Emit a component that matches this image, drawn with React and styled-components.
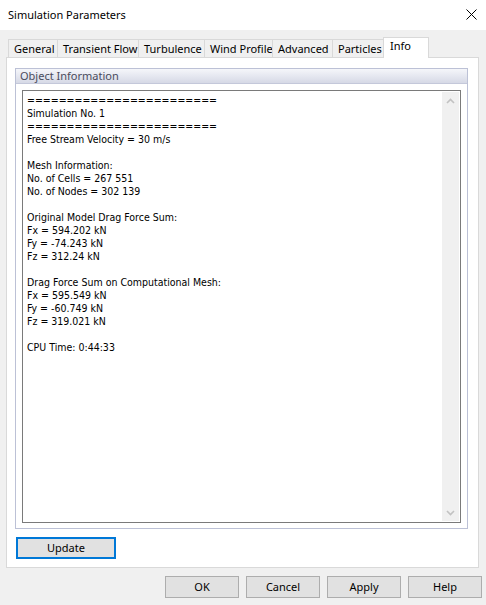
import React from "react";
import styled, { createGlobalStyle } from "styled-components";

const Global = createGlobalStyle`
  html, body { margin: 0; padding: 0; background: #f0f0f0; }
  body { font-family: "Noto Sans", "Open Sans", sans-serif; font-size: 11px; color: #000; }
  * { box-sizing: border-box; }
`;

const Dialog = styled.div`
  width: 486px;
  height: 605px;
  display: flex;
  flex-direction: column;
  background: #f0f0f0;
  overflow: hidden;
`;

const TitleBar = styled.div`
  height: 30px;
  flex: none;
  background: #fff;
  display: flex;
  align-items: center;
  justify-content: space-between;
  padding: 0 8px 1px 8px;
`;

const Title = styled.span`
  font-size: 11px;
  line-height: 16px;
  color: #000;
`;

const CloseButton = styled.button`
  width: 12px;
  height: 12px;
  border: none;
  background: transparent;
  padding: 0;
  margin-right: 1px;
  display: flex;
  align-items: center;
  justify-content: center;
`;

const Body = styled.div`
  flex: 1;
  display: flex;
  flex-direction: column;
  padding: 7px 7px 7px 6px;
`;

const TabStrip = styled.div`
  height: 21px;
  margin-bottom: -1px;
  padding-left: 2px;
  display: flex;
  align-items: flex-end;
  position: relative;
  z-index: 1;
`;

const Tab = styled.div`
  width: ${(p) => p.$w}px;
  height: ${(p) => (p.$active ? 21 : 18)}px;
  margin-bottom: ${(p) => (p.$active ? 0 : 1)}px;
  margin-left: ${(p) => (p.$first ? 0 : -1)}px;
  border: 1px solid #d9d9d9;
  border-bottom: none;
  background: ${(p) => (p.$active ? "#fff" : "#f0f0f0")};
  position: relative;
  z-index: ${(p) => (p.$active ? 2 : 1)};
  padding: ${(p) => (p.$active ? "0 0 4px 6px" : "1px 0 0 5px")};
  font-size: 11px;
  line-height: 16px;
  white-space: nowrap;
  display: flex;
  align-items: ${(p) => (p.$active ? "flex-end" : "flex-start")};
`;

const Panel = styled.div`
  height: 511px;
  border: 1px solid #d9d9d9;
  background: #fff;
  display: flex;
  flex-direction: column;
  padding: 10px 10px 8px 8px;
`;

const Group = styled.div`
  height: 461px;
  border: 1px solid #bcc1d6;
  display: flex;
  flex-direction: column;
`;

const GroupHeader = styled.div`
  height: 15px;
  flex: none;
  border-bottom: 1px solid #c4c8da;
  background: linear-gradient(#f5f6fa, #d6d9e6);
  color: #4a4b5c;
  font-size: 11px;
  line-height: 14px;
  padding-left: 4px;
  white-space: nowrap;
`;

const GroupBody = styled.div`
  flex: 1;
  padding: 6px 6px 5px 6px;
  display: flex;
`;

const TextArea = styled.div`
  flex: 1;
  border: 1px solid #7a7a7a;
  background: #fff;
  padding: 1px;
  display: flex;
`;

const TextContent = styled.pre`
  flex: 1;
  margin: 0;
  padding: 2px 0 0 3px;
  font-family: "DejaVu Sans Condensed", "Liberation Sans", sans-serif;
  font-size: 10.5px;
  line-height: 13px;
  color: #000;
  white-space: pre;
  overflow: hidden;
`;

const ScrollBar = styled.div`
  width: 17px;
  flex: none;
  background: #f0f0f0;
  display: flex;
  flex-direction: column;
  justify-content: space-between;
`;

const ScrollArrow = styled.div`
  width: 17px;
  height: 17px;
  display: flex;
  align-items: center;
  justify-content: center;
`;

const UpdateButton = styled.button`
  margin-top: 8px;
  margin-left: 1px;
  width: 100px;
  height: 22px;
  border: 2px solid #0078d7;
  background: #e1e1e1;
  font-family: inherit;
  font-size: 11px;
  line-height: 16px;
  color: #000;
  padding: 0;
`;

const Footer = styled.div`
  margin-top: 8px;
  margin-right: -3px;
  display: flex;
  justify-content: flex-end;
  gap: 7px;
`;

const DialogButton = styled.button`
  width: 74px;
  height: 22px;
  border: 1px solid #adadad;
  background: #e1e1e1;
  font-family: inherit;
  font-size: 11px;
  line-height: 16px;
  color: #000;
  padding: 0;
`;

const tabs = [
  { label: "General", w: 50 },
  { label: "Transient Flow", w: 82 },
  { label: "Turbulence", w: 67 },
  { label: "Wind Profile", w: 69 },
  { label: "Advanced", w: 61 },
  { label: "Particles", w: 52 },
  { label: "Info", w: 46, active: true },
];

const bar = "========================";

const report = [
  bar,
  "Simulation No. 1",
  bar,
  "Free Stream Velocity = 30 m/s",
  "",
  "Mesh Information:",
  "No. of Cells = 267 551",
  "No. of Nodes = 302 139",
  "",
  "Original Model Drag Force Sum:",
  "Fx = 594.202 kN",
  "Fy = -74.243 kN",
  "Fz = 312.24 kN",
  "",
  "Drag Force Sum on Computational Mesh:",
  "Fx = 595.549 kN",
  "Fy = -60.749 kN",
  "Fz = 319.021 kN",
  "",
  "CPU Time: 0:44:33",
].join("\n");

const Chevron = ({ up }) => (
  <svg width="9" height="6" viewBox="0 0 9 6">
    <path
      d={up ? "M1 5 L4.5 1.5 L8 5" : "M1 1 L4.5 4.5 L8 1"}
      fill="none"
      stroke="#c2c2c2"
      strokeWidth="1.6"
    />
  </svg>
);

export default function App() {
  return (
    <>
      <Global />
      <Dialog>
        <TitleBar>
          <Title>Simulation Parameters</Title>
          <CloseButton aria-label="Close">
            <svg width="11" height="11" viewBox="0 0 11 11">
              <path d="M0.5 0.5 L10.5 10.5 M10.5 0.5 L0.5 10.5" stroke="#000" strokeWidth="1" />
            </svg>
          </CloseButton>
        </TitleBar>
        <Body>
          <TabStrip>
            {tabs.map((t, i) => (
              <Tab key={t.label} $w={t.w} $active={t.active} $first={i === 0}>
                {t.label}
              </Tab>
            ))}
          </TabStrip>
          <Panel>
            <Group>
              <GroupHeader>Object Information</GroupHeader>
              <GroupBody>
                <TextArea>
                  <TextContent>{report}</TextContent>
                  <ScrollBar>
                    <ScrollArrow>
                      <Chevron up />
                    </ScrollArrow>
                    <ScrollArrow>
                      <Chevron />
                    </ScrollArrow>
                  </ScrollBar>
                </TextArea>
              </GroupBody>
            </Group>
            <UpdateButton>Update</UpdateButton>
          </Panel>
          <Footer>
            <DialogButton>OK</DialogButton>
            <DialogButton>Cancel</DialogButton>
            <DialogButton>Apply</DialogButton>
            <DialogButton>Help</DialogButton>
          </Footer>
        </Body>
      </Dialog>
    </>
  );
}
